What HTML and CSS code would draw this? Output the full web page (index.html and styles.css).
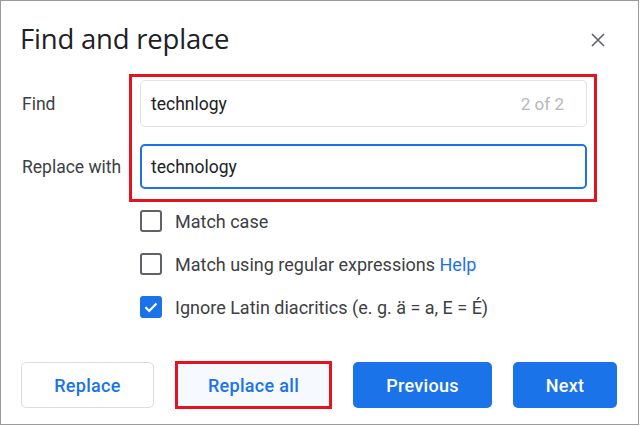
FILE: index.html
```html
<!DOCTYPE html>
<html>
<head>
<meta charset="utf-8">
<link rel="stylesheet" href="styles.css">
</head>
<body>
<div class="dialog">
  <div class="header">
    <h1 class="title">Find and replace</h1>
    <svg class="close" width="14" height="14" viewBox="0 0 14 14"><path d="M1 1L13 13M13 1L1 13" stroke="#5f6368" stroke-width="1.6" fill="none"/></svg>
  </div>
  <div class="form">
    <div class="label">Find</div>
    <div class="field field-find"><span class="value">technlogy</span><span class="count">2 of 2</span></div>
    <div class="label">Replace with</div>
    <div class="field field-replace"><span class="value">technology</span></div>
  </div>
  <div class="options">
    <div class="option"><span class="box"></span><span>Match case</span></div>
    <div class="option"><span class="box"></span><span>Match using regular expressions <span class="link">Help</span></span></div>
    <div class="option"><span class="box checked"><svg width="16" height="16" viewBox="0 0 16 16"><path d="M2.5 8.3L6.2 12L13.5 4.5" stroke="#fff" stroke-width="2.2" fill="none"/></svg></span><span>Ignore Latin diacritics (e. g. ä = a, E = É)</span></div>
  </div>
  <div class="footer">
    <button class="btn btn-outline">Replace</button>
    <button class="btn btn-outline btn-marked">Replace all</button>
    <button class="btn btn-primary btn-prev">Previous</button>
    <button class="btn btn-primary btn-next">Next</button>
  </div>
  <div class="mark"></div>
</div>
</body>
</html>
```
FILE: styles.css
```css
html, body {
  margin: 0;
  padding: 0;
  background: #ffffff;
}
.dialog {
  position: relative;
  width: 639px;
  height: 425px;
  box-sizing: border-box;
  border: 1px solid #9a9a9a;
  font-family: Roboto, "Liberation Sans", sans-serif;
  color: #3c4043;
  display: flex;
  flex-direction: column;
}
.header {
  display: flex;
  align-items: center;
  justify-content: space-between;
  padding: 21px 33px 0 19px;
  height: 34px;
}
.title {
  margin: 0;
  font-family: "Open Sans", Roboto, sans-serif;
  font-weight: 400;
  font-size: 27.5px;
  line-height: 34px;
  color: #202124;
  letter-spacing: -0.2px;
}
.close {
  display: block;
  margin-top: 1px;
}
.form {
  display: grid;
  grid-template-columns: 118px 447px;
  grid-template-rows: 47px 45px;
  row-gap: 17px;
  padding: 24px 0 0 21px;
  align-items: center;
}
.label {
  font-size: 17.5px;
  color: #3c4043;
}
.field {
  height: 100%;
  box-sizing: border-box;
  border-radius: 5px;
  display: flex;
  align-items: center;
  justify-content: space-between;
  padding: 0 22px 0 10px;
  font-size: 17.5px;
  color: #202124;
}
.field-find {
  border: 1px solid #e3e3e3;
}
.field-replace {
  border: 2px solid #1a73e8;
  padding-left: 9px;
}
.count {
  color: #b5b8bc;
  font-size: 17px;
}
.options {
  display: flex;
  flex-direction: column;
  gap: 21px;
  padding: 21px 0 0 139px;
}
.option {
  display: flex;
  align-items: center;
  gap: 13px;
  height: 22px;
  font-size: 18px;
  color: #3c4043;
}
.box {
  width: 22px;
  height: 22px;
  box-sizing: border-box;
  border: 2px solid #5f6368;
  border-radius: 3px;
  display: flex;
  align-items: center;
  justify-content: center;
}
.box.checked {
  background: #1a73e8;
  border-color: #1a73e8;
}
.box svg {
  display: block;
}
.link {
  color: #1a73e8;
}
.footer {
  display: flex;
  gap: 21px;
  padding: 0 0 0 20px;
  margin-top: auto;
  margin-bottom: 15px;
  align-items: center;
}
.btn {
  font-family: Roboto, "Liberation Sans", sans-serif;
  font-size: 18px;
  font-weight: 500;
  height: 46px;
  border-radius: 5px;
  box-sizing: border-box;
  cursor: pointer;
  letter-spacing: 0.3px;
}
.btn-outline {
  background: #ffffff;
  border: 1px solid #dadce0;
  color: #1a73e8;
  width: 133px;
}
.btn-marked {
  width: 157px;
  height: 48px;
  border: 3px solid #e5131d;
  border-radius: 0;
  background: #f6f9fe;
}
.btn-primary {
  background: #1a73e8;
  border: none;
  color: #ffffff;
}
.btn-prev {
  width: 139px;
}
.btn-next {
  width: 104px;
}
.mark {
  position: absolute;
  left: 128px;
  top: 73px;
  width: 468px;
  height: 128px;
  box-sizing: border-box;
  border: 3px solid #e5131d;
  pointer-events: none;
}
```
